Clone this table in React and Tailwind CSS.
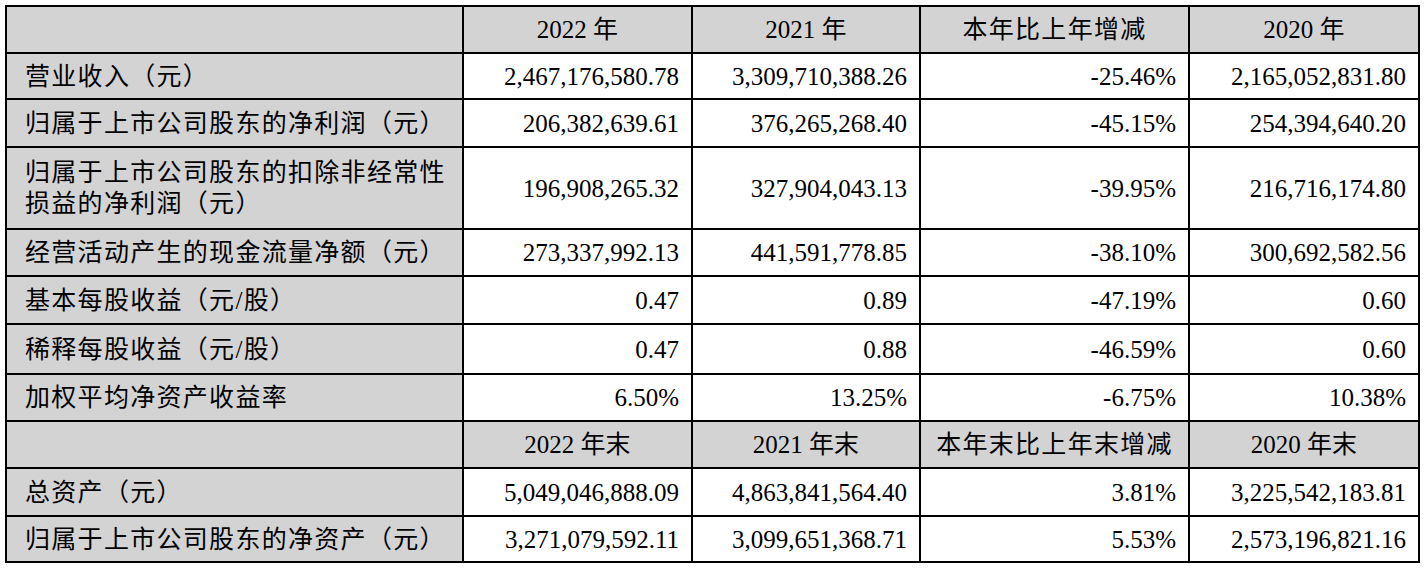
import React from "react";

const rows = [
  { h: "h-[45px]", header: true, cells: ["", "2022 年", "2021 年", "本年比上年增减", "2020 年"] },
  { h: "h-[46px]", cells: ["营业收入（元）", "2,467,176,580.78", "3,309,710,388.26", "-25.46%", "2,165,052,831.80"] },
  { h: "h-[48px]", cells: ["归属于上市公司股东的净利润（元）", "206,382,639.61", "376,265,268.40", "-45.15%", "254,394,640.20"] },
  { h: "h-[82px]", cells: [["归属于上市公司股东的扣除非经常性", "损益的净利润（元）"], "196,908,265.32", "327,904,043.13", "-39.95%", "216,716,174.80"] },
  { h: "h-[47px]", cells: ["经营活动产生的现金流量净额（元）", "273,337,992.13", "441,591,778.85", "-38.10%", "300,692,582.56"] },
  { h: "h-[48px]", cells: ["基本每股收益（元/股）", "0.47", "0.89", "-47.19%", "0.60"] },
  { h: "h-[50px]", cells: ["稀释每股收益（元/股）", "0.47", "0.88", "-46.59%", "0.60"] },
  { h: "h-[47px]", cells: ["加权平均净资产收益率", "6.50%", "13.25%", "-6.75%", "10.38%"] },
  { h: "h-[47px]", header: true, cells: ["", "2022 年末", "2021 年末", "本年末比上年末增减", "2020 年末"] },
  { h: "h-[48px]", cells: ["总资产（元）", "5,049,046,888.09", "4,863,841,564.40", "3.81%", "3,225,542,183.81"] },
  { h: "h-[46px]", cells: ["归属于上市公司股东的净资产（元）", "3,271,079,592.11", "3,099,651,368.71", "5.53%", "2,573,196,821.16"] },
];

export default function App() {
  return (
    <div className="bg-white w-[1426px] h-[569px] pt-[5px] pl-[5px]">
      <div
        className="w-[1415px] border-2 border-black text-black text-[25px]"
        style={{ fontFamily: "'Liberation Serif', 'Noto Sans CJK SC', serif" }}
      >
        {rows.map((r, i) => (
          <div
            key={i}
            className={`grid grid-cols-[455px_229px_228px_269px_230px] ${r.h} ${i > 0 ? "border-t-2 border-black" : ""} ${r.header ? "bg-[#d3d3d3]" : ""}`}
          >
            {r.cells.map((c, j) => {
              const border = j > 0 ? "border-l-2 border-black" : "";
              if (j === 0) {
                return (
                  <div key={j} className={`bg-[#d3d3d3] flex flex-col justify-center pl-[18px] leading-[31px] tracking-[1.3px] ${border}`}>
                    {Array.isArray(c) ? c.map((t, k) => <div key={k}>{t}</div>) : <div>{c}</div>}
                  </div>
                );
              }
              return (
                <div
                  key={j}
                  className={`flex items-center leading-[31px] ${border} ${r.header ? "justify-center" : "justify-end pr-[12px]"} ${r.header && j === 3 ? "tracking-[1.3px]" : ""}`}
                >
                  {c}
                </div>
              );
            })}
          </div>
        ))}
      </div>
    </div>
  );
}
